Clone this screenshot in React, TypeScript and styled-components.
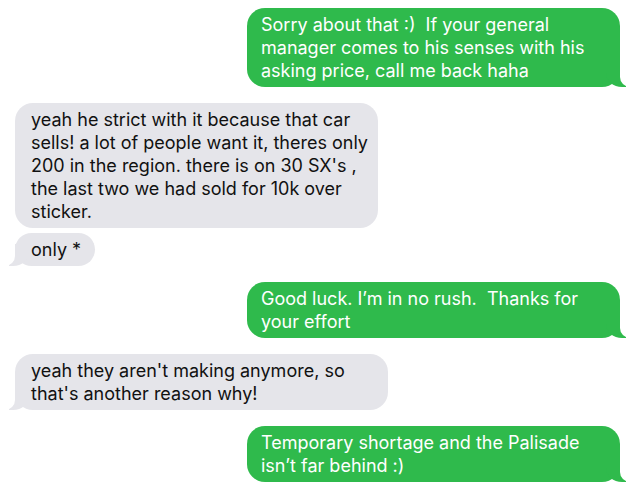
import React from "react";
import styled, { createGlobalStyle, css } from "styled-components";

const Global = createGlobalStyle`
  html, body { margin: 0; padding: 0; background: #ffffff; }
  body { font-family: Inter, "Noto Sans", "Liberation Sans", sans-serif; }
`;

const Thread = styled.div`
  display: flex;
  flex-direction: column;
  padding: 8px 20px 0 15px;
  width: 640px;
  box-sizing: border-box;
`;

const Group = styled.div<{ $side: "in" | "out" }>`
  display: flex;
  flex-direction: column;
  align-items: ${(p) => (p.$side === "out" ? "flex-end" : "flex-start")};
  gap: 5px;
  margin-bottom: 16px;
`;

const GREEN = "#2fba4c";
const GRAY = "#e5e5ea";

const Bubble = styled.div<{ $side: "in" | "out"; $w?: number; $tail?: boolean }>`
  position: relative;
  box-sizing: border-box;
  width: ${(p) => (p.$w ? `${p.$w}px` : "auto")};
  border-radius: 18px;
  padding: 5px 14px 5px ${(p) => (p.$side === "out" ? 14 : 16)}px;
  font-size: 18px;
  line-height: 23px;
  white-space: pre;
  background: ${(p) => (p.$side === "out" ? GREEN : GRAY)};
  color: ${(p) => (p.$side === "out" ? "#ffffff" : "#111111")};

  ${(p) =>
    p.$tail &&
    p.$side === "out" &&
    css`
      &::before {
        content: "";
        position: absolute;
        bottom: 0;
        right: -6px;
        width: 20px;
        height: 22px;
        background: ${GREEN};
        border-bottom-left-radius: 16px 14px;
      }
      &::after {
        content: "";
        position: absolute;
        bottom: 0;
        right: -12px;
        width: 12px;
        height: 24px;
        background: #ffffff;
        border-bottom-left-radius: 10px;
      }
    `}

  ${(p) =>
    p.$tail &&
    p.$side === "in" &&
    css`
      &::before {
        content: "";
        position: absolute;
        bottom: 0;
        left: -6px;
        width: 20px;
        height: 22px;
        background: ${GRAY};
        border-bottom-right-radius: 16px 14px;
      }
      &::after {
        content: "";
        position: absolute;
        bottom: 0;
        left: -12px;
        width: 12px;
        height: 24px;
        background: #ffffff;
        border-bottom-right-radius: 10px;
      }
    `}
`;

const Text = styled.span`
  position: relative;
  z-index: 2;
`;

export default function App() {
  return (
    <>
      <Global />
      <Thread>
        <Group $side="out">
          <Bubble $side="out" $w={373} $tail>
            <Text>{"Sorry about that :)  If your general\nmanager comes to his senses with his\nasking price, call me back haha"}</Text>
          </Bubble>
        </Group>
        <Group $side="in">
          <Bubble $side="in" $w={363}>
            <Text>{"yeah he strict with it because that car\nsells! a lot of people want it, theres only\n200 in the region. there is on 30 SX's ,\nthe last two we had sold for 10k over\nsticker."}</Text>
          </Bubble>
          <Bubble $side="in" $tail>
            <Text>{"only *"}</Text>
          </Bubble>
        </Group>
        <Group $side="out">
          <Bubble $side="out" $w={373} $tail>
            <Text>{"Good luck. I\u2019m in no rush.  Thanks for\nyour effort"}</Text>
          </Bubble>
        </Group>
        <Group $side="in">
          <Bubble $side="in" $w={373} $tail>
            <Text>{"yeah they aren't making anymore, so\nthat's another reason why!"}</Text>
          </Bubble>
        </Group>
        <Group $side="out">
          <Bubble $side="out" $w={373} $tail>
            <Text>{"Temporary shortage and the Palisade\nisn\u2019t far behind :)"}</Text>
          </Bubble>
        </Group>
      </Thread>
    </>
  );
}
